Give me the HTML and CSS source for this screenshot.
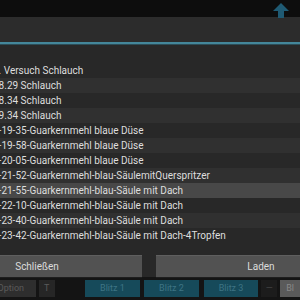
FILE: index.html
```html
<!DOCTYPE html>
<html>
<head>
<meta charset="utf-8">
<link rel="stylesheet" href="styles.css">
</head>
<body>
<div class="screen">
  <div class="topbar">
    <svg class="up" width="18" height="16" viewBox="0 0 18 16">
      <path d="M9 1 L17 9 L12 9 L12 16 L6 16 L6 9 L1 9 Z" fill="#1f5a73"/>
    </svg>
  </div>
  <div class="dialog">
    <div class="title"></div>
    <div class="divider"></div>
    <div class="list">
      <div class="row">1. Versuch Schlauch</div>
      <div class="row alt">18.29 Schlauch</div>
      <div class="row">18.34 Schlauch</div>
      <div class="row alt">19.34 Schlauch</div>
      <div class="row">1-19-35-Guarkernmehl blaue Düse</div>
      <div class="row alt">1-19-58-Guarkernmehl blaue Düse</div>
      <div class="row">1-20-05-Guarkernmehl blaue Düse</div>
      <div class="row alt">1-21-52-Guarkernmehl-blau-SäulemitQuerspritzer</div>
      <div class="row sel">1-21-55-Guarkernmehl-blau-Säule mit Dach</div>
      <div class="row">1-22-10-Guarkernmehl-blau-Säule mit Dach</div>
      <div class="row alt">1-23-40-Guarkernmehl-blau-Säule mit Dach</div>
      <div class="row">1-23-42-Guarkernmehl-blau-Säule mit Dach-4Tropfen</div>
    </div>
    <div class="actions">
      <button class="btn">Schließen</button>
      <button class="btn">Laden</button>
    </div>
  </div>
  <div class="strip">
    <span class="chip gray wide">Option</span>
    <span class="chip gray small">T</span>
    <span class="chip teal b1">Blitz 1</span>
    <span class="chip teal b2">Blitz 2</span>
    <span class="chip teal b3">Blitz 3</span>
    <span class="chip dark">—</span>
    <span class="chip light">Bl</span>
  </div>
</div>
</body>
</html>
```
FILE: styles.css
```css
html, body {
  margin: 0;
  padding: 0;
  background: #0d0d0d;
}
.screen {
  width: 300px;
  height: 300px;
  overflow: hidden;
  font-family: Roboto, "Liberation Sans", sans-serif;
  background: #0d0d0d;
}
.topbar {
  height: 17px;
  display: flex;
  justify-content: flex-end;
  align-items: flex-start;
  padding-right: 10px;
  box-sizing: border-box;
}
.up {
  margin-top: 2px;
}
.dialog {
  margin-left: -68px;
  width: 434px;
  background: #282828;
}
.title {
  height: 25px;
  background: #2c2c2c;
}
.divider {
  height: 2px;
  background: #44879a;
  border-bottom: 1px solid #2c4d57;
}
.list {
  padding-top: 18px;
}
.row {
  height: 15px;
  line-height: 15px;
  font-size: 10px;
  color: #dedede;
  padding-left: 61px;
  white-space: nowrap;
  overflow: hidden;
  background: #282828;
}
.row.alt {
  background: #303030;
}
.row.sel {
  background: #484848;
}
.actions {
  display: grid;
  grid-template-columns: 1fr 1fr;
  gap: 14px;
  padding-top: 12px;
}
.btn {
  height: 22px;
  border: none;
  border-top: 1px solid #5f5f5f;
  background: #525252;
  color: #dcdcdc;
  font-family: Roboto, "Liberation Sans", sans-serif;
  font-size: 10px;
  padding: 0;
  box-shadow: 0 1px 0 #1e1e1e;
}
.strip {
  height: 23px;
  background: #141414;
  display: flex;
  align-items: center;
  font-size: 9px;
}
.chip {
  height: 17px;
  line-height: 17px;
  text-align: center;
  box-sizing: border-box;
  overflow: hidden;
  white-space: nowrap;
}
.gray {
  background: #2e2e2e;
  color: #5a5a5a;
}
.wide {
  width: 36px;
  margin-left: 0;
  text-indent: -14px;
}
.small {
  width: 16px;
  margin-left: 3px;
  background: #262626;
}
.teal {
  background: #164a5a;
  color: #3e7484;
}
.b1 {
  width: 56px;
  margin-left: 30px;
}
.b2 {
  width: 55px;
  margin-left: 4px;
}
.b3 {
  width: 55px;
  margin-left: 5px;
}
.dark {
  width: 16px;
  margin-left: 3px;
  background: #1c1c1c;
  color: #444;
}
.light {
  width: 20px;
  margin-left: 3px;
  background: #5a5a5a;
  color: #888;
}
```
